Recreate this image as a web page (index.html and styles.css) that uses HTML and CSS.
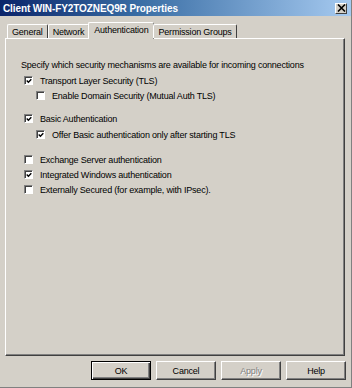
FILE: index.html
```html
<!DOCTYPE html>
<html>
<head>
<meta charset="utf-8">
<link rel="stylesheet" href="styles.css">
</head>
<body>
<div class="window">
  <div class="titlebar">
    <span class="title">Client WIN-FY2TOZNEQ9R Properties</span>
    <span class="close"><svg width="9" height="8" viewBox="0 0 9 8"><path d="M1 0.5 L8 7.5 M8 0.5 L1 7.5" stroke="#000" stroke-width="1.6"/></svg></span>
  </div>
  <div class="tabs">
    <div class="tab">General</div>
    <div class="tab">Network</div>
    <div class="tab active">Authentication</div>
    <div class="tab">Permission Groups</div>
  </div>
  <div class="panel">
    <div class="intro">Specify which security mechanisms are available for incoming connections</div>
    <div class="row r-tls"><span class="cb checked"><svg viewBox="0 0 7 7"><path d="M0.8 3 L2.8 5 L6.2 1.4" fill="none" stroke="#000" stroke-width="1.6"/></svg></span><span>Transport Layer Security (TLS)</span></div>
    <div class="row sub r-dom"><span class="cb"></span><span>Enable Domain Security (Mutual Auth TLS)</span></div>
    <div class="row r-basic"><span class="cb checked"><svg viewBox="0 0 7 7"><path d="M0.8 3 L2.8 5 L6.2 1.4" fill="none" stroke="#000" stroke-width="1.6"/></svg></span><span>Basic Authentication</span></div>
    <div class="row sub r-offer"><span class="cb checked"><svg viewBox="0 0 7 7"><path d="M0.8 3 L2.8 5 L6.2 1.4" fill="none" stroke="#000" stroke-width="1.6"/></svg></span><span>Offer Basic authentication only after starting TLS</span></div>
    <div class="row r-exch"><span class="cb"></span><span>Exchange Server authentication</span></div>
    <div class="row r-int"><span class="cb checked"><svg viewBox="0 0 7 7"><path d="M0.8 3 L2.8 5 L6.2 1.4" fill="none" stroke="#000" stroke-width="1.6"/></svg></span><span>Integrated Windows authentication</span></div>
    <div class="row r-ext"><span class="cb"></span><span>Externally Secured (for example, with IPsec).</span></div>
  </div>
  <div class="buttons">
    <div class="btn default"><span>OK</span></div>
    <div class="btn"><span>Cancel</span></div>
    <div class="btn disabled"><span>Apply</span></div>
    <div class="btn"><span>Help</span></div>
  </div>
</div>
</body>
</html>
```
FILE: styles.css
```css
html, body {
  margin: 0;
  padding: 0;
  background: #d4d0c8;
}
.window {
  width: 352px;
  height: 388px;
  box-sizing: border-box;
  border-right: 1px solid #808080;
  border-bottom: 1px solid #808080;
  display: flex;
  flex-direction: column;
  font-family: "Liberation Sans", Arial, sans-serif;
  font-size: 9px;
  letter-spacing: -0.2px;
  color: #000;
  background: #d4d0c8;
}
.titlebar {
  height: 16px;
  flex: none;
  display: flex;
  align-items: center;
  justify-content: space-between;
  padding: 0 4px 0 3px;
  background: linear-gradient(to right, #0a246a 0%, #3a6ea5 40%, #a6caf0 100%);
}
.title {
  color: #fff;
  font-weight: bold;
  font-size: 10px;
  letter-spacing: -0.1px;
}
.close {
  width: 12px;
  height: 11px;
  box-sizing: border-box;
  background: #d4d0c8;
  border: 1px solid;
  border-color: #fff #404040 #404040 #fff;
  display: flex;
  align-items: center;
  justify-content: center;
}
.close svg { display: block; }
.tabs {
  display: flex;
  align-items: flex-end;
  padding: 6px 0 0 7px;
  height: 17px;
  flex: none;
  position: relative;
  z-index: 1;
  margin-bottom: -1px;
}
.tab {
  height: 14px;
  box-sizing: border-box;
  padding: 1px 4px 0;
  display: flex;
  align-items: center;
  border-top: 1px solid #fff;
  border-left: 1px solid #fff;
  border-right: 1px solid #404040;
  border-radius: 2px 2px 0 0;
  margin-bottom: 1px;
}
.tab.active {
  height: 17px;
  padding: 0 5px 2px;
  margin: 0 -1px 0 -1px;
  background: #d4d0c8;
  border-right-color: #808080;
}
.panel {
  flex: 1;
  margin: 0 6px 0 5px;
  border: 1px solid;
  border-color: #fff #404040 #404040 #fff;
  box-shadow: inset -1px -1px 0 #808080;
  padding: 20px 0 0 15px;
}
.intro {
  height: 12px;
  line-height: 12px;
  margin-bottom: 2px;
}
.row {
  display: flex;
  align-items: center;
  height: 15px;
  padding-left: 3px;
}
.row.sub { padding-left: 15px; }
.r-dom { margin-top: 0; }
.r-basic { margin-top: 8px; }
.r-offer { margin-top: 1px; }
.r-exch { margin-top: 10px; }
.cb {
  width: 9px;
  height: 9px;
  box-sizing: border-box;
  flex: none;
  background: #fff;
  border: 1px solid;
  border-color: #808080 #fff #fff #808080;
  box-shadow: inset 1px 1px 0 #404040;
  margin-right: 7px;
  display: flex;
  align-items: center;
  justify-content: center;
}
.cb svg {
  width: 6px;
  height: 6px;
  display: block;
  margin: 1px 0 0 1px;
}
.buttons {
  flex: none;
  display: flex;
  justify-content: flex-end;
  gap: 5px;
  padding: 5px 5px 7px 0;
}
.btn {
  width: 60px;
  height: 19px;
  box-sizing: border-box;
  border: 1px solid;
  border-color: #fff #404040 #404040 #fff;
  box-shadow: inset -1px -1px 0 #808080;
  display: flex;
  align-items: center;
  justify-content: center;
}
.btn.default {
  border: 1px solid #000;
  box-shadow: inset 1px 1px 0 #fff, inset -1px -1px 0 #404040, inset -2px -2px 0 #808080;
}
.btn.disabled span {
  color: #808080;
  text-shadow: 1px 1px 0 #fff;
}
```
